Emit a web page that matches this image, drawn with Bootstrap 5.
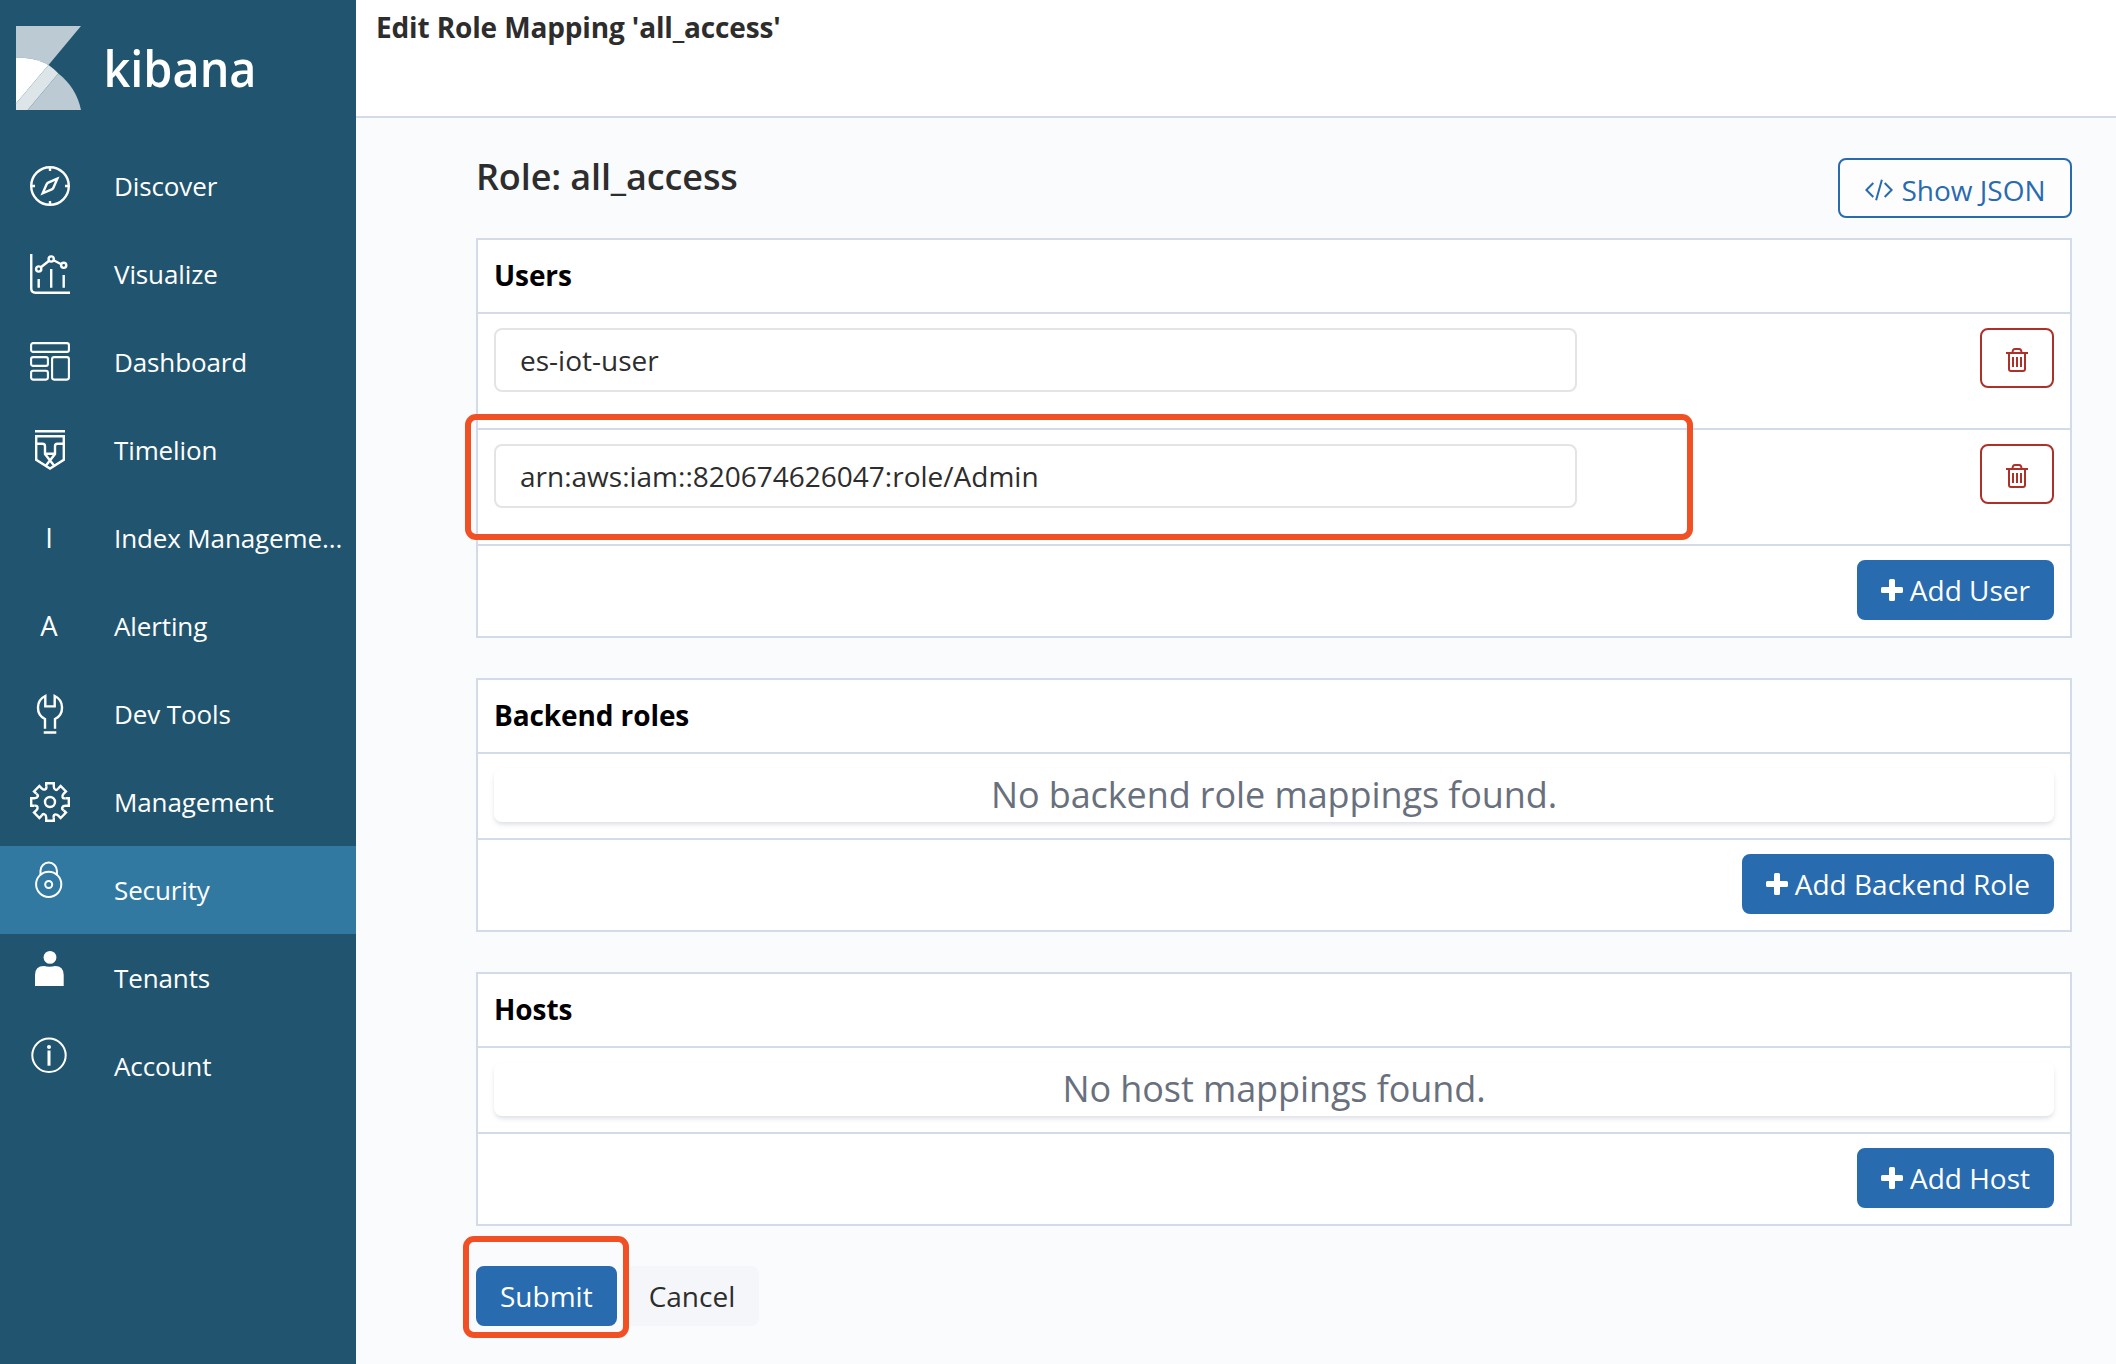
<!DOCTYPE html>
<html lang="en">
<head>
<meta charset="utf-8">
<title>Kibana - Edit Role Mapping</title>
<link href="https://cdn.jsdelivr.net/npm/bootstrap@5.3.0/dist/css/bootstrap.min.css" rel="stylesheet">
<style>
body{font-family:"Open Sans","Noto Sans",sans-serif;font-size:28px;line-height:40px;color:#2d2d2d;background:#fafbfd;height:1364px;overflow:hidden}
.side{width:356px;background:#21546e;color:#fff}
.brand{height:142px;padding:26px 0 0 16px}
.brand svg{display:block;overflow:visible}
.side .nav-link{height:88px;padding:0 0 0 30px;color:#fff;font-size:26px;letter-spacing:-.12px;gap:44px}
.side .nav-link.active{background:#3279a1}
.side .nav-link svg{width:40px;height:40px;overflow:visible;flex:none;fill:none;stroke:#fff;stroke-width:2.4}
.letter{width:38px;margin-right:2px;text-align:center;font-size:27.5px;flex:none}
.topbar{height:118px;border-bottom:2px solid #d3dae8;background:#fff;padding:7px 20px;letter-spacing:-.14px}
.content{padding:40px 44px 0 120px}
.role-title{font-size:36px;line-height:40px;font-weight:600;letter-spacing:-.12px;margin:-1px 0 0}
.headrow{height:80px}
.btn{font-size:28px;line-height:40px;height:60px;border-width:2px;border-radius:8px;padding:8px 22px;white-space:nowrap}
.btn svg{display:block;flex:none}
.btn-main{background:#286baf;color:#fff;border-color:#286baf}
.btn-main.with-icon{gap:7px}
.btn-line{background:#fdfdfe;color:#286baf;border-color:#286baf;gap:8px;padding:10px 24.5px 6px 25px}
.btn-del{width:74px;color:#ae3129;border-color:#ae3129;background:#fff}
.btn-del svg{margin-top:4px}
.btn-cancel{background:#f5f6fa;border-color:#f5f6fa;color:#2d2d2d}
.panel{border:2px solid #d3dae8;border-radius:0;margin-bottom:40px;background:#fff}
.panel-title{height:74px;padding:15px 16px;font-weight:700;letter-spacing:-.1px;color:#000;border-bottom:2px solid #d3dae8}
.panel-row{height:116px;padding:14px 16px;border-bottom:2px solid #d3dae8;position:relative}
.panel-row .form-control{width:1083px;height:64px;border:2px solid #e4e4e6;border-radius:8px;padding:0 24px;font-size:28px;color:#2d2d2d}
.panel-empty{height:86px;padding:14px 16px;border-bottom:2px solid #d3dae8}
.empty-box{height:54px;border-radius:8px;box-shadow:0 3px 5px -1px rgba(100,110,140,.25);font-size:36px;letter-spacing:-.09px;line-height:54px;color:#69707d;text-align:center}
.panel-foot{height:90px;padding:14px 16px}
.hilite{position:absolute;border:6px solid #f05023;border-radius:11px;pointer-events:none}
.hilite-row{left:-13px;top:-16.5px;width:1228px;height:126px}
.hilite-submit{left:-13px;top:-30px;width:166px;height:102px}
</style>
<script src="https://cdn.jsdelivr.net/npm/bootstrap@5.3.0/dist/js/bootstrap.bundle.min.js"></script>
</head>
<body>
<div class="d-flex h-100">
<aside class="side flex-shrink-0">
  <div class="brand">
    <svg width="240" height="84" viewBox="0 0 240 84">
      <path fill="#bccad3" d="M0 0H65L32.5 39C24 34 12 31.6 0 31.6Z"/>
      <path fill="#fff" d="M0 31.6C12 31.6 24 34 32.5 39L0 77.5Z"/>
      <path fill="#dde5e9" d="M32.5 39C36 41.5 39.5 44.5 42.3 47.5L11.7 84H0V77.5Z"/>
      <path fill="#bccad3" d="M42.3 47.5C54 56.5 62 69 65 84H11.7Z"/>
      <text x="87.500" y="61" fill="#fff" font-size="51" font-weight="600" textLength="153" lengthAdjust="spacingAndGlyphs">kibana</text>
    </svg>
  </div>
  <nav class="nav flex-column flex-nowrap">
    <a class="nav-link d-flex align-items-center"><svg viewBox="0 0 40 40"><circle cx="20" cy="20" r="18.8"/><path d="M20 1v4M20 35v4M1 20h4M35 20h4"/><path d="M27.3 12.7L18.2 16.6Q17 17.2 16.6 18.2L12.7 27.3L21.8 23.4Q23 22.8 23.4 21.8Z"/></svg><span>Discover</span></a>
    <a class="nav-link d-flex align-items-center"><svg viewBox="0 0 40 40"><path d="M1.25 0V34.5Q1.25 38.7 5.5 38.7H40M8.7 25v8.7M21.2 15v18.7M33.7 21v12.7M10.9 13.3L18.8 7M23.6 6.3L31.2 10.2"/><circle cx="8.7" cy="15" r="2.6"/><circle cx="21.2" cy="5" r="2.6"/><circle cx="33.7" cy="11.3" r="2.6"/></svg><span>Visualize</span></a>
    <a class="nav-link d-flex align-items-center"><svg viewBox="0 0 40 40"><g stroke-width="2.1"><rect x="1.1" y="1.1" width="37.8" height="8.8" rx="2"/><rect x="1.1" y="15.1" width="16.8" height="8.8" rx="2"/><rect x="1.1" y="28.8" width="16.8" height="8.800" rx="2"/><rect x="22.1" y="15.1" width="16.8" height="22.5" rx="2"/></g></svg><span>Dashboard</span></a>
    <a class="nav-link d-flex align-items-center"><svg viewBox="0 0 40 40"><path d="M5 1.25H35M6.2 6.2H33.8V29.8L20 38.5L6.2 29.8ZM6.2 13.8H12.5Q15 13.8 15 16.3V24L24 35.5M33.8 13.8H27.5Q25 13.8 25 16.3V24L16 35.5M15 23.8H25"/></svg><span>Timelion</span></a>
    <a class="nav-link d-flex align-items-center"><span class="letter">I</span><span>Index Manageme...</span></a>
    <a class="nav-link d-flex align-items-center"><span class="letter">A</span><span>Alerting</span></a>
    <a class="nav-link d-flex align-items-center"><svg viewBox="0 0 40 40"><path d="M15 34.7V25A12.8 12.8 0 0 1 15.3 2V12.4H24.7V2A12.8 12.8 0 0 1 25 25V34.7M13.7 38.5H26.3"/></svg><span>Dev Tools</span></a>
    <a class="nav-link d-flex align-items-center"><svg viewBox="-20 -20 40 40"><defs><path id="tooth" d="M-3.8 -15.6V-18.8H3.8V-15.6C3.8 -12 6.8 -10.9 8.3 -13.7"/></defs><circle r="5"/><use href="#tooth"/><use href="#tooth" transform="rotate(45)"/><use href="#tooth" transform="rotate(90)"/><use href="#tooth" transform="rotate(135)"/><use href="#tooth" transform="rotate(180)"/><use href="#tooth" transform="rotate(225)"/><use href="#tooth" transform="rotate(270)"/><use href="#tooth" transform="rotate(315)"/></svg><span>Management</span></a>
    <a class="nav-link active d-flex align-items-center"><svg viewBox="0 0 40 40"><g stroke-width="2"><circle cx="18.7" cy="14.3" r="12.6"/><circle cx="18.7" cy="14.5" r="3.5"/><path d="M10.5 5.3V.8a8.2 8.2 0 0 1 16.4 0V5.3"/></g></svg><span>Security</span></a>
    <a class="nav-link d-flex align-items-center"><svg viewBox="0 0 40 40"><g fill="#fff" stroke="none"><circle cx="20" cy="-.6" r="6.4"/><path d="M5 28V17Q5 8 14 8Q19.5 9.5 25 8Q33.7 8 33.7 17V28Z"/></g></svg><span>Tenants</span></a>
    <a class="nav-link d-flex align-items-center"><svg viewBox="0 0 40 40"><g stroke-width="2"><circle cx="19" cy="9.3" r="16.7"/><circle cx="19" cy="1" r="2" fill="#fff" stroke="none"/><path stroke-width="3" d="M19 4.5V19.7"/></g></svg><span>Account</span></a>
  </nav>
</aside>
<main class="flex-grow-1">
  <header class="topbar fw-bold"><span>Edit Role Mapping 'all_access'</span></header>
  <div class="content">
    <div class="headrow d-flex justify-content-between align-items-start">
      <h2 class="role-title">Role: all_access</h2>
      <button class="btn btn-line d-flex align-items-center"><svg width="28" height="22" viewBox="0 0 28 22" fill="none" stroke="currentColor" stroke-width="2"><path d="M8.3 4L1.4 11L8.3 18M19.7 4L26.6 11L19.7 18M16.9 .7L11.1 21.3"/></svg><span>Show JSON</span></button>
    </div>
    <section class="panel">
      <div class="panel-title">Users</div>
      <div class="panel-row d-flex justify-content-between align-items-start">
        <input class="form-control" value="es-iot-user">
        <button class="btn btn-del d-flex align-items-center justify-content-center p-0"><svg width="22" height="24" viewBox="0 0 22 24" fill="none" stroke="currentColor" stroke-width="2"><path d="M0 5H22M3 5V21Q3 23 5 23H17Q19 23 19 21V5M6.5 5Q6.5 1 9 1H13Q15.500 1 15.500 5M7 9V19M11 9V19M15 9V19"/></svg></button>
      </div>
      <div class="panel-row d-flex justify-content-between align-items-start">
        <input class="form-control" value="arn:aws:iam::820674626047:role/Admin">
        <button class="btn btn-del d-flex align-items-center justify-content-center p-0"><svg width="22" height="24" viewBox="0 0 22 24" fill="none" stroke="currentColor" stroke-width="2"><path d="M0 5H22M3 5V21Q3 23 5 23H17Q19 23 19 21V5M6.5 5Q6.5 1 9 1H13Q15.500 1 15.500 5M7 9V19M11 9V19M15 9V19"/></svg></button>
        <div class="hilite hilite-row"></div>
      </div>
      <div class="panel-foot d-flex justify-content-end"><button class="btn btn-main with-icon d-flex align-items-center"><svg width="22" height="22" viewBox="0 0 22 22" fill="currentColor"><path d="M9.500 0h3q1.500 0 1.500 1.500V8h6.500Q22 8 22 9.500v3q0 1.500-1.500 1.500H14v6.500q0 1.500-1.500 1.500h-3Q8 22 8 20.500V14H1.500Q0 14 0 12.500v-3Q0 8 1.500 8H8V1.500Q8 0 9.500 0Z"/></svg><span>Add User</span></button></div>
    </section>
    <section class="panel">
      <div class="panel-title">Backend roles</div>
      <div class="panel-empty"><div class="empty-box">No backend role mappings found.</div></div>
      <div class="panel-foot d-flex justify-content-end"><button class="btn btn-main with-icon d-flex align-items-center"><svg width="22" height="22" viewBox="0 0 22 22" fill="currentColor"><path d="M9.500 0h3q1.500 0 1.500 1.500V8h6.500Q22 8 22 9.500v3q0 1.500-1.500 1.500H14v6.500q0 1.500-1.500 1.500h-3Q8 22 8 20.500V14H1.500Q0 14 0 12.500v-3Q0 8 1.500 8H8V1.500Q8 0 9.500 0Z"/></svg><span>Add Backend Role</span></button></div>
    </section>
    <section class="panel">
      <div class="panel-title">Hosts</div>
      <div class="panel-empty"><div class="empty-box">No host mappings found.</div></div>
      <div class="panel-foot d-flex justify-content-end"><button class="btn btn-main with-icon d-flex align-items-center"><svg width="22" height="22" viewBox="0 0 22 22" fill="currentColor"><path d="M9.500 0h3q1.500 0 1.500 1.500V8h6.500Q22 8 22 9.500v3q0 1.500-1.500 1.500H14v6.500q0 1.500-1.500 1.500h-3Q8 22 8 20.500V14H1.500Q0 14 0 12.500v-3Q0 8 1.500 8H8V1.500Q8 0 9.500 0Z"/></svg><span>Add Host</span></button></div>
    </section>
    <div class="d-flex position-relative">
      <button class="btn btn-main">Submit</button>
      <button class="btn btn-cancel ms-2">Cancel</button>
      <div class="hilite hilite-submit"></div>
    </div>
  </div>
</main>
</div>
</body>
</html>
